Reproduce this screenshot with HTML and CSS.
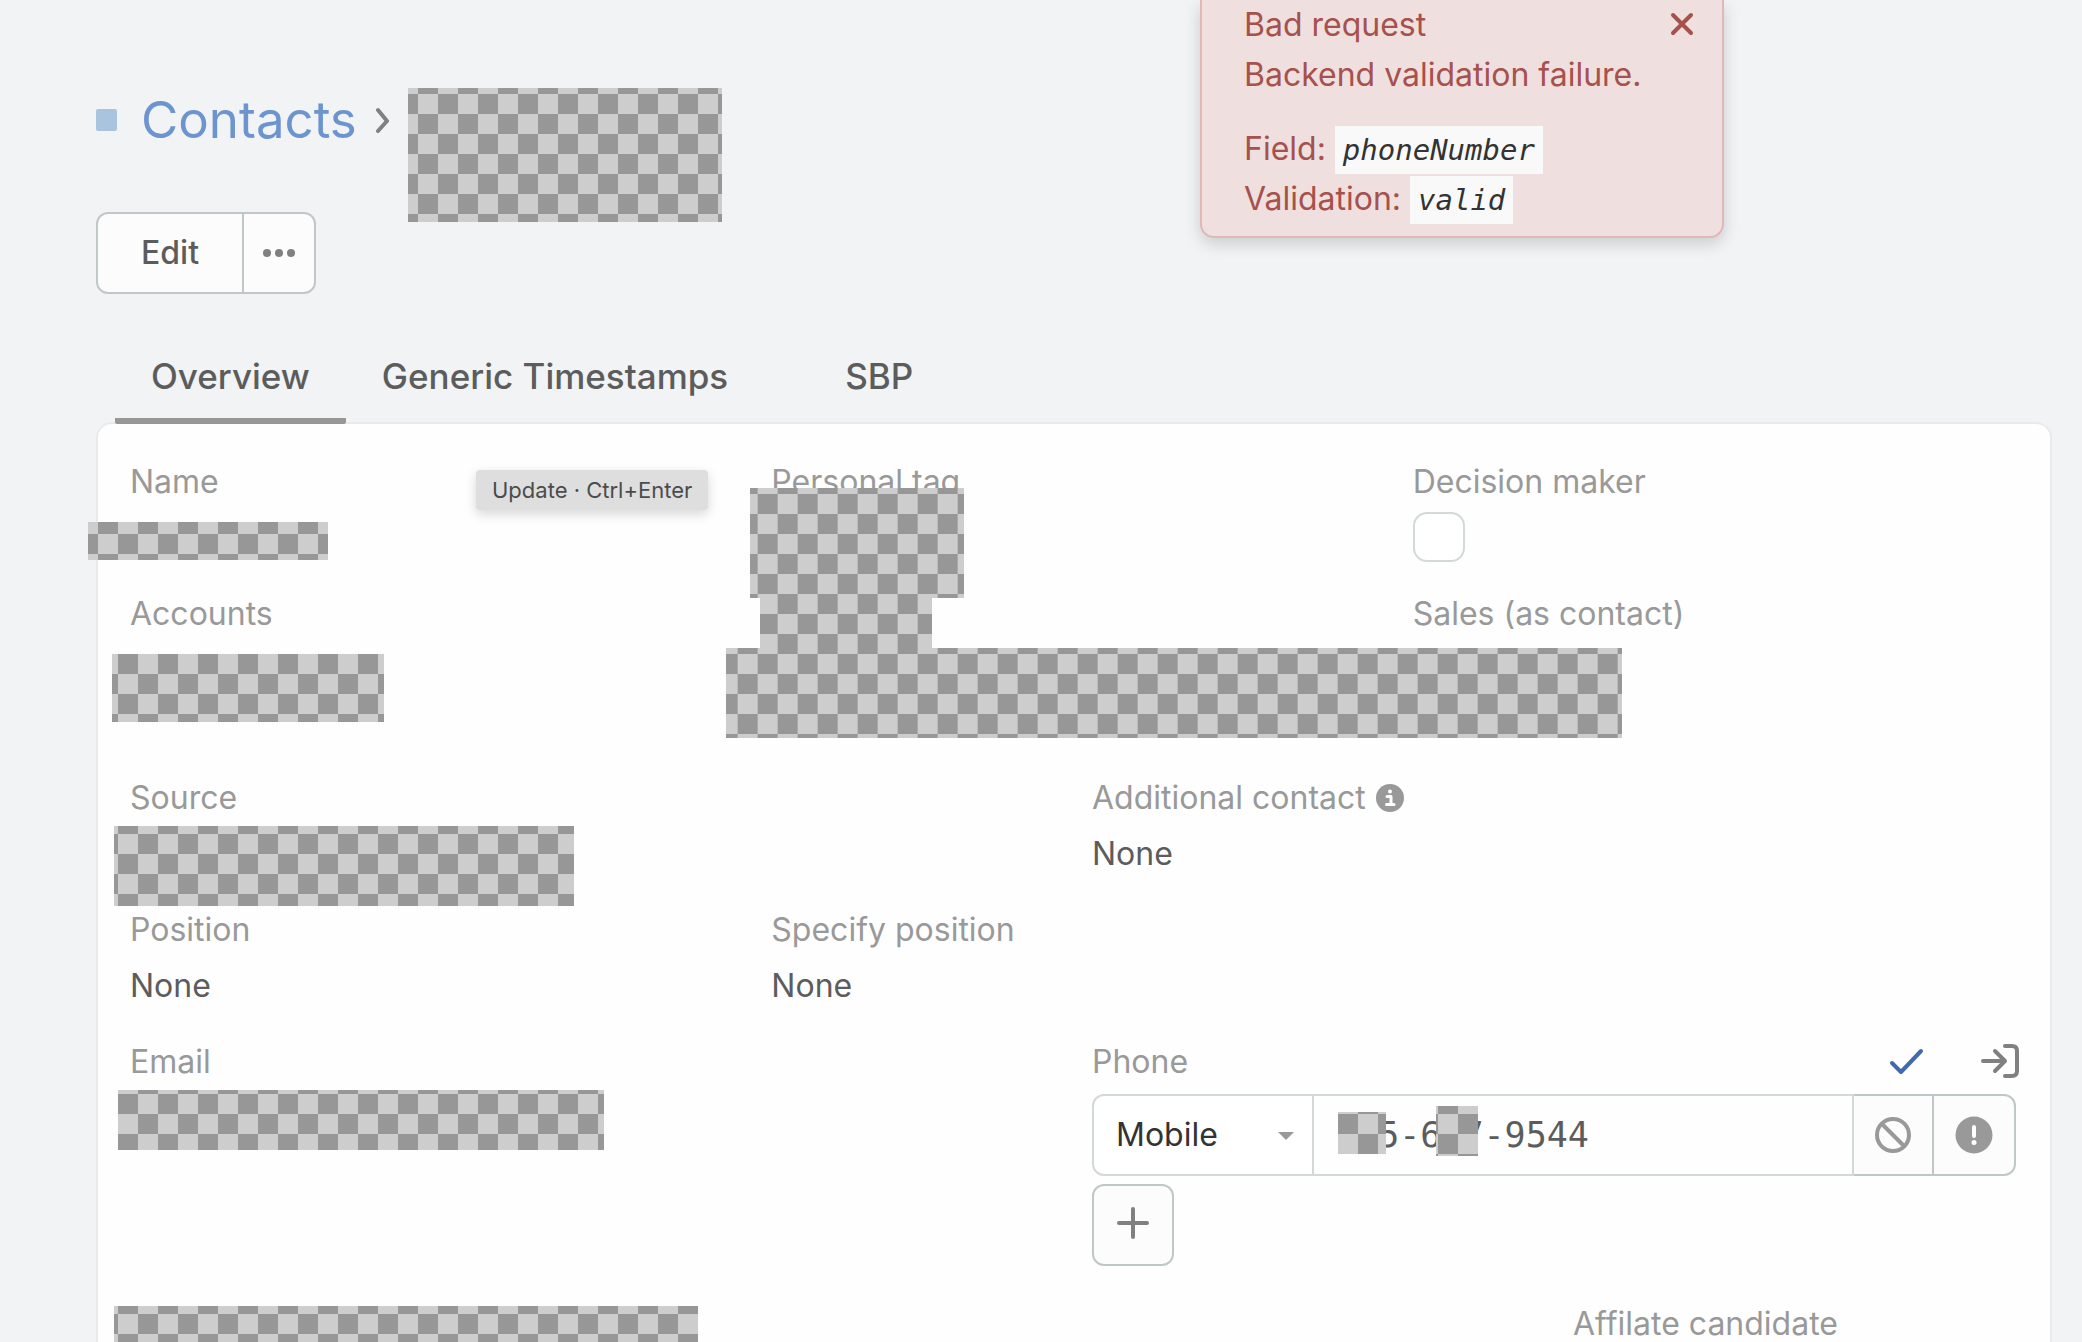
FILE: index.html
```html
<!DOCTYPE html>
<html lang="en">
<head>
    <meta charset="UTF-8">
    <meta name="viewport" content="width=device-width, initial-scale=1.0">
    <title>Contacts</title>
    <link rel="stylesheet" href="styles.css">
</head>
<body>
    <div class="page">
        <header class="page-header">
            <span class="scope-color"></span>
            <h1 class="breadcrumb">
                <a href="#contacts">Contacts</a>
                <svg class="chevron" viewBox="0 0 16 26" aria-hidden="true"><path d="M3 3l9 11-9 10"/></svg>
            </h1>
            <span class="redacted redacted-title"></span>
        </header>

        <div class="btn-group">
            <button type="button" class="btn btn-edit">Edit</button>
            <button type="button" class="btn btn-more" aria-label="More actions">
                <svg viewBox="0 0 32 10"><circle cx="4" cy="5" r="4"/><circle cx="16" cy="5" r="4"/><circle cx="28" cy="5" r="4"/></svg>
            </button>
        </div>

        <nav class="tabs">
            <button type="button" class="tab active">Overview</button>
            <button type="button" class="tab">Generic Timestamps</button>
            <button type="button" class="tab">SBP</button>
        </nav>

        <main class="panel">
            <div class="row cols-3">
                <div class="field">
                    <span class="label">Name</span>
                    <span class="redacted redacted-name"></span>
                </div>
                <div class="field">
                    <span class="label">Personal tag</span>
                    <span class="redacted redacted-tag"></span>
                    <span class="redacted redacted-tag-value"></span>
                </div>
                <div class="field">
                    <label class="label" for="decisionMaker">Decision maker</label>
                    <input type="checkbox" id="decisionMaker" class="checkbox">
                </div>
            </div>

            <div class="row cols-3 row-accounts">
                <div class="field">
                    <span class="label">Accounts</span>
                    <span class="redacted redacted-accounts"></span>
                </div>
                <div class="field">
                    <span class="redacted redacted-wide"></span>
                </div>
                <div class="field">
                    <span class="label">Sales (as contact)</span>
                </div>
            </div>

            <div class="row cols-2">
                <div class="field">
                    <span class="label">Source</span>
                    <span class="redacted redacted-source"></span>
                </div>
                <div class="field">
                    <span class="label">Additional contact
                        <svg class="info-icon" viewBox="0 0 28 28" aria-hidden="true"><circle cx="14" cy="14" r="14"/><path d="M11 12.500h4v8M10.500 20.500h7.500"/><circle class="dot" cx="14" cy="7.500" r="2"/></svg>
                    </span>
                    <span class="value">None</span>
                </div>
            </div>

            <div class="row cols-3">
                <div class="field">
                    <span class="label">Position</span>
                    <span class="value">None</span>
                </div>
                <div class="field">
                    <span class="label">Specify position</span>
                    <span class="value">None</span>
                </div>
            </div>

            <div class="row cols-2 row-phone">
                <div class="field">
                    <span class="label">Email</span>
                    <span class="redacted redacted-email"></span>
                </div>
                <div class="field">
                    <div class="label-bar">
                        <label class="label" for="phoneNumber">Phone</label>
                        <div class="inline-actions">
                            <button type="button" class="icon-btn save" aria-label="Update">
                                <svg viewBox="0 0 36 36"><path d="M4 19l9 9L33 7"/></svg>
                            </button>
                            <button type="button" class="icon-btn" aria-label="Cancel">
                                <svg viewBox="0 0 40 36"><path d="M3 17h22M15 7l10 10-10 10M25 2h7q5 0 5 5v20q0 5-5 5h-7"/></svg>
                            </button>
                        </div>
                    </div>
                    <div class="input-group">
                        <div class="select-wrap">
                            <select class="phone-type" aria-label="Phone type">
                                <option>Mobile</option>
                            </select>
                        </div>
                        <div class="number-wrap">
                            <input type="tel" id="phoneNumber" class="phone-number" value="&nbsp;&nbsp;5-6&nbsp;7-9544">
                            <span class="redacted redacted-area"></span>
                            <span class="redacted redacted-digits"></span>
                        </div>
                        <button type="button" class="btn addon" aria-label="Opted out">
                            <svg viewBox="0 0 38 38" class="ban"><circle cx="19" cy="19" r="16"/><path d="M8 8l22 22"/></svg>
                        </button>
                        <button type="button" class="btn addon" aria-label="Invalid">
                            <svg viewBox="0 0 38 38" class="alert"><circle cx="19" cy="19" r="18.500"/><path d="M19 11v9"/><circle class="dot" cx="19" cy="26.500" r="2.500"/></svg>
                        </button>
                    </div>
                    <button type="button" class="btn btn-add" aria-label="Add phone">
                        <svg viewBox="0 0 32 32"><path d="M16 2v28M2 16h28"/></svg>
                    </button>
                </div>
            </div>

            <div class="row cols-4">
                <div class="field">
                    <span class="redacted redacted-last"></span>
                </div>
                <div class="field"></div>
                <div class="field"></div>
                <div class="field">
                    <span class="label">Affilate candidate</span>
                </div>
            </div>

            <div class="tooltip" role="tooltip">Update · Ctrl+Enter</div>
        </main>

        <div class="toast" role="alert">
            <div class="toast-body">
                <p>Bad request<br>Backend validation failure.</p>
                <p>Field: <code>phoneNumber</code><br>Validation: <code>valid</code></p>
            </div>
            <button type="button" class="toast-close" aria-label="Close">
                <svg viewBox="0 0 24 24"><path d="M3 3l18 18M21 3L3 21"/></svg>
            </button>
        </div>
    </div>
</body>
</html>
```
FILE: styles.css
```css
* {
    box-sizing: border-box;
}

body {
    margin: 0;
    background: #f1f3f5;
    color: #5c5c5c;
    font-family: Inter, "Liberation Sans", sans-serif;
    font-size: 32px;
    line-height: 48px;
}

button,
input,
select {
    font: inherit;
    color: inherit;
}

button {
    cursor: pointer;
}

svg {
    display: block;
    fill: none;
    stroke: currentColor;
    stroke-width: 4;
    stroke-linecap: round;
    stroke-linejoin: round;
}

.page {
    position: relative;
    display: flex;
    flex-direction: column;
    height: 100vh;
    padding: 96px 30px 0 96px;
    overflow: hidden;
}

/* header */
.page-header {
    display: flex;
    flex-shrink: 0;
    align-items: center;
    gap: 24px;
    margin-bottom: 68px;
}

.scope-color {
    width: 21px;
    height: 22px;
    border-radius: 2px;
    background: #a9c4de;
}

.breadcrumb {
    display: flex;
    align-items: center;
    gap: 18px;
    margin: 0;
    font-size: 51px;
    font-weight: 400;
}

.breadcrumb a {
    color: #6c94cf;
    text-decoration: none;
}

.chevron {
    width: 16px;
    height: 26px;
    color: #808080;
}

/* the pattern is anchored to the window, so neighbouring blocks line up */
.redacted {
    position: absolute;
    z-index: 2;
    background: repeating-conic-gradient(#979797 0 25%, #cdcdcd 0 50%) 18px 14px / 40px 40px fixed;
}

.redacted-title {
    top: 88px;
    left: 408px;
    width: 314px;
    height: 134px;
}

/* buttons */
.btn {
    display: flex;
    align-items: center;
    justify-content: center;
    height: 82px;
    padding: 0;
    border: 2px solid #c0c7c9;
    background: #fcfcfc;
}

.btn-group {
    display: flex;
    flex-shrink: 0;
    margin-bottom: 48px;
}

.btn-edit {
    width: 148px;
    border-radius: 12px 0 0 12px;
    font-weight: 500;
}

.btn-more {
    width: 74px;
    margin-left: -2px;
    border-radius: 0 12px 12px 0;
    color: #808080;
}

.btn-more svg {
    width: 32px;
    height: 10px;
    fill: currentColor;
    stroke: none;
}

/* tabs */
.tabs {
    z-index: 1;
    display: flex;
    flex-shrink: 0;
    padding-left: 19px;
}

.tab {
    min-width: 230px;
    height: 82px;
    padding: 0 36px 8px;
    border: 0;
    border-bottom: 6px solid transparent;
    border-radius: 2px;
    background: none;
    font-size: 35px;
    font-weight: 500;
}

.tab.active {
    border-bottom-color: #979797;
}

/* panel */
.panel {
    position: relative;
    display: flex;
    flex: 1 0 auto;
    flex-direction: column;
    gap: 24px;
    margin-top: -2px;
    padding: 34px 34px 0 32px;
    border: 2px solid #e8eaed;
    border-bottom: 0;
    border-radius: 16px 16px 0 0;
    background: #fefefe;
}

.row {
    display: grid;
    flex-shrink: 0;
    column-gap: 38px;
    min-height: 108px;
}

.cols-2 {
    grid-template-columns: repeat(2, 1fr);
}

.cols-3 {
    grid-template-columns: repeat(3, 1fr);
}

.cols-4 {
    grid-template-columns: repeat(4, 1fr);
}

.row-accounts {
    min-height: 160px;
}

.row-phone {
    min-height: 238px;
}

.field {
    position: relative;
    display: flex;
    flex-direction: column;
    gap: 4px;
    min-width: 0;
}

.label {
    display: flex;
    align-items: center;
    gap: 10px;
    color: #999;
}

.value {
    line-height: 56px;
}

.redacted-name {
    top: 64px;
    left: -42px;
    width: 240px;
    height: 38px;
}

.redacted-tag {
    top: 30px;
    left: -21px;
    width: 214px;
    height: 110px;
}

.redacted-tag-value {
    top: 140px;
    left: -11px;
    width: 172px;
    height: 50px;
}

.redacted-accounts {
    top: 64px;
    left: -18px;
    width: 272px;
    height: 68px;
}

.redacted-wide {
    top: 58px;
    left: -45px;
    width: 896px;
    height: 90px;
}

.redacted-source {
    top: 52px;
    left: -16px;
    width: 460px;
    height: 80px;
}

.redacted-email {
    top: 52px;
    left: -12px;
    width: 486px;
    height: 60px;
}

.redacted-last {
    top: 6px;
    left: -16px;
    width: 584px;
    height: 60px;
}

.checkbox {
    width: 52px;
    height: 50px;
    margin: 2px 0 0;
    border: 2px solid #d3d8d8;
    border-radius: 14px;
    background: #fff;
    appearance: none;
}

.info-icon {
    width: 28px;
    height: 28px;
    stroke: #fff;
    stroke-width: 3;
}

.info-icon circle {
    fill: #999;
    stroke: none;
}

.info-icon .dot {
    fill: #fff;
}

/* phone editor */
.label-bar {
    display: flex;
    align-items: center;
    justify-content: space-between;
}

.inline-actions {
    display: flex;
    align-items: center;
    gap: 54px;
    margin-right: -4px;
}

.icon-btn {
    padding: 0;
    border: 0;
    background: none;
    color: #808080;
}

.icon-btn svg {
    width: 40px;
    height: 36px;
}

.icon-btn.save {
    color: #4169b0;
}

.input-group {
    display: flex;
    height: 82px;
    margin: 4px 0;
}

.select-wrap {
    position: relative;
    width: 222px;
}

.select-wrap::after {
    content: "";
    position: absolute;
    top: 38px;
    right: 20px;
    border: 8px solid transparent;
    border-top-color: #999;
    border-bottom: 0;
    pointer-events: none;
}

.phone-type {
    width: 100%;
    height: 100%;
    padding: 0 22px;
    border: 2px solid #d3d8d8;
    border-radius: 12px 0 0 12px;
    background: #fff;
    color: #333;
    appearance: none;
}

.number-wrap {
    position: relative;
    flex: 1;
    margin-left: -2px;
}

.phone-number {
    width: 100%;
    height: 100%;
    padding: 0 22px;
    border: 2px solid #d3d8d8;
    border-radius: 0;
    background: #fefefe;
    font-family: "DejaVu Sans Mono", monospace;
    font-size: 35px;
}

.redacted-area {
    top: 18px;
    left: 26px;
    width: 48px;
    height: 42px;
}

.redacted-digits {
    top: 12px;
    left: 124px;
    width: 42px;
    height: 50px;
}

.addon {
    width: 82px;
    margin-left: -2px;
    color: #999;
}

.addon:last-child {
    width: 84px;
    border-radius: 0 12px 12px 0;
}

.addon svg {
    width: 38px;
    height: 38px;
}

.addon .alert {
    stroke: #fff;
}

.alert circle {
    fill: #999;
    stroke: none;
}

.alert .dot {
    fill: #fff;
}

.btn-add {
    width: 82px;
    padding-bottom: 4px;
    border-radius: 12px;
    color: #808080;
}

.btn-add svg {
    width: 32px;
    height: 32px;
}

/* overlays */
.tooltip {
    position: absolute;
    top: 46px;
    left: 378px;
    z-index: 3;
    padding: 0 16px;
    border-radius: 4px;
    background: #dedede;
    box-shadow: 0 4px 12px rgba(0, 0, 0, 0.16);
    color: #4c4c4c;
    font-size: 22px;
    line-height: 40px;
}

.toast {
    position: absolute;
    top: 0;
    left: 50%;
    z-index: 4;
    display: flex;
    justify-content: space-between;
    width: 524px;
    margin-left: 159px;
    padding: 0 28px 12px 42px;
    border: 2px solid #dfb8b8;
    border-top: 0;
    border-radius: 0 0 14px 14px;
    background: #efdfdf;
    box-shadow: 0 6px 16px rgba(0, 0, 0, 0.16);
    color: #a6514c;
    line-height: 50px;
}

.toast p {
    margin: 0 0 24px;
}

.toast p:last-child {
    margin: 0;
}

.toast code {
    display: inline-block;
    padding: 0 8px;
    background: #f9f9f9;
    color: #333;
    font-family: "DejaVu Sans Mono", monospace;
    font-size: 29px;
    font-style: italic;
    line-height: 48px;
    vertical-align: bottom;
}

.toast-close {
    align-self: flex-start;
    margin-top: 12px;
    padding: 0;
    border: 0;
    background: none;
    color: #a6514c;
}

.toast-close svg {
    width: 24px;
    height: 24px;
}
```
